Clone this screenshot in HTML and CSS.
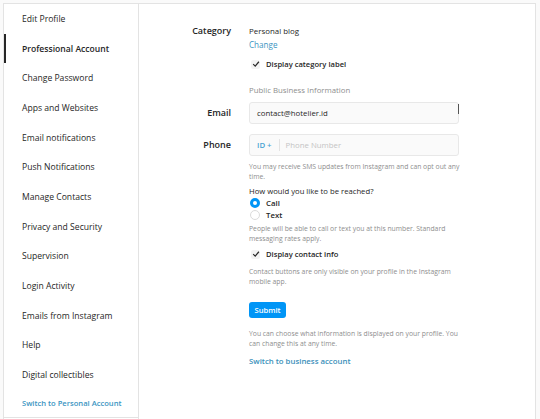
FILE: index.html
```html
<!DOCTYPE html>
<html>
<head>
<meta charset="utf-8">
<link rel="stylesheet" href="styles.css">
</head>
<body>
<div class="card">
  <nav class="side">
    <ul class="menu">
      <li class="item">Edit Profile</li>
      <li class="item active">Professional Account</li>
      <li class="item">Change Password</li>
      <li class="item">Apps and Websites</li>
      <li class="item">Email notifications</li>
      <li class="item">Push Notifications</li>
      <li class="item">Manage Contacts</li>
      <li class="item">Privacy and Security</li>
      <li class="item">Supervision</li>
      <li class="item">Login Activity</li>
      <li class="item">Emails from Instagram</li>
      <li class="item">Help</li>
      <li class="item">Digital collectibles</li>
      <li class="item switch">Switch to Personal Account</li>
    </ul>
  </nav>
  <main class="main">
    <div class="row cat-row">
      <div class="label">Category</div>
      <div class="field">
        <div class="cat-name">Personal blog</div>
        <div class="link">Change</div>
        <div class="check"><span class="box"><svg viewBox="0 0 10 10" width="8" height="8"><path d="M1.5 5.2 L4 7.6 L8.6 2.2" fill="none" stroke="#262626" stroke-width="1.5"/></svg></span><span class="check-text">Display category label</span></div>
        <div class="section">Public Business Information</div>
      </div>
    </div>
    <div class="row input-row">
      <div class="label">Email</div>
      <div class="field">
        <div class="input email">contact@hotelier.id<span class="caret"></span></div>
      </div>
    </div>
    <div class="row input-row phone-row">
      <div class="label">Phone</div>
      <div class="field">
        <div class="input phone"><span class="cc">ID +</span><span class="sep"></span><span class="ph">Phone Number</span></div>
        <p class="help">You may receive SMS updates from Instagram and can opt out any<br>time.</p>
        <div class="question">How would you like to be reached?</div>
        <div class="radio"><span class="dot on"></span>Call</div>
        <div class="radio"><span class="dot"></span>Text</div>
        <p class="help help-after">People will be able to call or text you at this number. Standard<br>messaging rates apply.</p>
        <div class="check check2"><span class="box"><svg viewBox="0 0 10 10" width="8" height="8"><path d="M1.5 5.2 L4 7.6 L8.6 2.2" fill="none" stroke="#262626" stroke-width="1.5"/></svg></span><span class="check-text">Display contact info</span></div>
        <p class="help">Contact buttons are only visible on your profile in the Instagram<br>mobile app.</p>
        <button class="submit">Submit</button>
        <p class="help help-last">You can choose what information is displayed on your profile. You<br>can change this at any time.</p>
        <div class="biz">Switch to business account</div>
      </div>
    </div>
  </main>
</div>
</body>
</html>
```
FILE: styles.css
```css
* { box-sizing: border-box; }
html, body { margin: 0; padding: 0; }
body {
  background: #fafafa;
  font-family: "Open Sans", "Noto Sans", sans-serif;
  color: #262626;
  width: 540px;
  height: 419px;
  overflow: hidden;
}
.card {
  margin: 3px 4px 0 3px;
  height: 416px;
  background: #fff;
  border: 1px solid #e3e3e3;
  border-bottom: 0;
  display: flex;
}
.side {
  width: 135px;
  flex: none;
  border-right: 1px solid #e3e3e3;
}
.menu {
  list-style: none;
  margin: 0;
  padding: 0;
  border-bottom: 1px solid #e3e3e3;
}
.item {
  height: 29.7px;
  display: flex;
  align-items: center;
  padding-left: 16px;
  border-left: 2px solid transparent;
  font-size: 8.6px;
  color: #262626;
  white-space: nowrap;
}
.item.active {
  border-left-color: #262626;
  font-weight: 600;
}
.item.switch {
  height: 27px;
  color: #3a95c2;
  font-size: 7.6px;
  font-weight: 600;
}
.main {
  flex: 1;
  padding-top: 20px;
}
.row {
  display: grid;
  grid-template-columns: 92px 210px;
  column-gap: 18px;
}
.label {
  text-align: right;
  font-weight: 600;
  font-size: 9px;
  line-height: 14px;
}
.cat-name {
  font-size: 7.9px;
  line-height: 13px;
  margin-top: 1px;
}
.link {
  font-size: 8.1px;
  line-height: 13px;
  color: #3a95c2;
}
.check {
  display: flex;
  align-items: center;
  height: 14px;
  margin-top: 6px;
  margin-left: 2px;
}
.box {
  width: 9px;
  height: 9px;
  display: flex;
  align-items: center;
  justify-content: center;
  background: #f2f2f2;
  border-radius: 2px;
  margin-right: 6px;
}
.check-text {
  font-size: 7.6px;
  font-weight: 600;
}
.section {
  font-size: 7.8px;
  color: #8e8e8e;
  margin-top: 13px;
  line-height: 12px;
}
.input-row { margin-top: 6px; align-items: center; }
.input-row .label { align-self: start; margin-top: 4px; }
.phone-row { margin-top: 10px; }
.input {
  position: relative;
  height: 22px;
  background: #fafafa;
  border: 1px solid #e8e8e8;
  border-radius: 3px;
  display: flex;
  align-items: center;
  padding-left: 7px;
  font-size: 7.8px;
}
.caret {
  position: absolute;
  right: -1px;
  top: 1px;
  width: 1px;
  height: 10px;
  background: #555;
}
.cc { color: #4aa3d3; font-weight: 600; }
.sep { width: 1px; height: 12px; background: #e3e3e3; margin: 0 6px 0 7px; }
.ph { color: #c4c4c4; }
.help {
  margin: 6px 0 0;
  font-size: 6.8px;
  line-height: 9.5px;
  color: #8e8e8e;
  white-space: nowrap;
}
.question {
  font-size: 7.7px;
  line-height: 12px;
  margin-top: 4px;
}
.radio {
  display: flex;
  align-items: center;
  height: 12px;
  font-size: 7.8px;
  font-weight: 600;
  margin-left: 1px;
}
.radio:first-of-type { margin-top: 2px; }
.dot {
  width: 10px;
  height: 10px;
  border-radius: 50%;
  border: 1px solid #dbdbdb;
  background: #fff;
  margin-right: 6px;
}
.dot.on { border: 3px solid #0095f6; }
.help-after { margin-top: 3px; }
.check2 { margin-top: 4px; }
.submit {
  display: block;
  margin-top: 16px;
  width: 37px;
  height: 16px;
  padding: 0;
  border: 0;
  border-radius: 3px;
  background: #0095f6;
  color: #fff;
  font-family: inherit;
  font-size: 7.6px;
  font-weight: 600;
}
.help-last { margin-top: 11px; }
.biz {
  margin-top: 8px;
  font-size: 7.8px;
  font-weight: 600;
  color: #3a8fba;
}
```
